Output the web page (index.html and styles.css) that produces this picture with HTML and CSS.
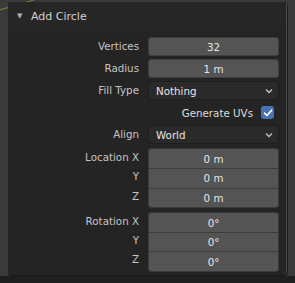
FILE: index.html
```html
<!DOCTYPE html>
<html lang="en">
<head>
<meta charset="UTF-8" />
<title>Add Circle</title>
<link rel="stylesheet" href="styles.css">
</head>
<body>
  <svg class="grid-line" width="40" height="12" viewBox="0 0 40 12"><path d="M0 10 L34 0" stroke="#6f7d2c" stroke-width="1.2" fill="none"/></svg>

  <div class="panel">
    <div class="panel-header">
      <span class="arrow">&#9660;</span>
      <span class="title">Add Circle</span>
    </div>

    <div class="panel-body">
      <div class="row">
        <div class="label">Vertices</div>
        <div class="field num">32</div>
      </div>
      <div class="row">
        <div class="label">Radius</div>
        <div class="field num">1 m</div>
      </div>
      <div class="row">
        <div class="label">Fill Type</div>
        <div class="field menu"><span>Nothing</span>
          <svg class="chev" width="8" height="6" viewBox="0 0 8 6"><path d="M1 1.5 L4 4.5 L7 1.5" stroke="#c4c4c4" stroke-width="1.3" fill="none"/></svg>
        </div>
      </div>
      <div class="row check-row">
        <span class="check-label">Generate UVs</span>
        <span class="checkbox">
          <svg width="10" height="10" viewBox="0 0 10 10"><path d="M1.5 5.2 L4 7.6 L8.6 2.2" stroke="#fff" stroke-width="1.6" fill="none" stroke-linecap="round" stroke-linejoin="round"/></svg>
        </span>
      </div>
      <div class="row">
        <div class="label">Align</div>
        <div class="field menu"><span>World</span>
          <svg class="chev" width="8" height="6" viewBox="0 0 8 6"><path d="M1 1.5 L4 4.5 L7 1.5" stroke="#c4c4c4" stroke-width="1.3" fill="none"/></svg>
        </div>
      </div>

      <div class="group">
        <div class="labels">
          <div class="label">Location X</div>
          <div class="label">Y</div>
          <div class="label">Z</div>
        </div>
        <div class="stack">
          <div class="field num">0 m</div>
          <div class="field num">0 m</div>
          <div class="field num">0 m</div>
        </div>
      </div>

      <div class="group">
        <div class="labels">
          <div class="label">Rotation X</div>
          <div class="label">Y</div>
          <div class="label">Z</div>
        </div>
        <div class="stack">
          <div class="field num">0°</div>
          <div class="field num">0°</div>
          <div class="field num">0°</div>
        </div>
      </div>
    </div>
  </div>
  <div class="bottom-bar"></div>
</body>
</html>
```

FILE: styles.css
```css
body {
  margin: 0;
  width: 295px;
  height: 283px;
  background: #3a3a3a;
  font-family: 'DejaVu Sans', 'Liberation Sans', sans-serif;
  font-size: 10.3px;
  color: #c8c8c8;
  position: relative;
  overflow: hidden;
}
.grid-line {
  position: absolute;
  left: 0;
  top: 0;
}
.panel {
  position: relative;
  margin: 2px 0 0 8px;
  width: 279px;
  height: 273px;
  background: #242424;
  border-right: 1px solid #4a4a4a;
  box-sizing: border-box;
  border-radius: 0 4px 4px 0;
  box-shadow: 1px 1px 0 #1b1b1b;
}
.panel-header {
  height: 28px;
  display: flex;
  align-items: center;
  padding-left: 9px;
  background: #262626;
}
.arrow {
  font-size: 7px;
  color: #b0b0b0;
  width: 12px;
  margin-top: -1px;
}
.title {
  color: #d0d0d0;
  font-size: 11px;
  margin-left: 2px;
}
.panel-body {
  display: flex;
  flex-direction: column;
  gap: 3px;
  padding-top: 7px;
}
.row {
  display: flex;
  align-items: center;
  height: 19px;
}
.label {
  width: 131px;
  text-align: right;
  color: #c4c4c4;
  line-height: 19.3px;
  height: 19.3px;
}
.field {
  margin-left: 9px;
  width: 131px;
  height: 19px;
  box-sizing: border-box;
  border-radius: 3px;
  display: flex;
  align-items: center;
  color: #e6e6e6;
}
.num {
  background: #545454;
  border: 1px solid #3e3e3e;
  justify-content: center;
}
.menu {
  background: #2a2a2a;
  border: 1px solid #1e1e1e;
  justify-content: space-between;
  padding: 0 5px 0 7px;
}
.check-row {
  justify-content: flex-end;
  padding-right: 12px;
  height: 19px;
}
.check-label {
  color: #dcdcdc;
  margin-right: 8px;
}
.checkbox {
  width: 13px;
  height: 13px;
  border-radius: 3px;
  background: #4772b3;
  display: flex;
  align-items: center;
  justify-content: center;
}
.group {
  display: flex;
  margin-top: 1px;
}
.labels {
  display: flex;
  flex-direction: column;
}
.stack {
  margin-left: 9px;
  display: flex;
  flex-direction: column;
  width: 131px;
  border: 1px solid #3a3a3a;
  border-radius: 3px;
  overflow: hidden;
  box-sizing: border-box;
}
.stack .field {
  margin-left: 0;
  width: auto;
  height: 19.3px;
  border: none;
  border-radius: 0;
  border-top: 1px solid #3c3c3c;
}
.stack .field:first-child {
  border-top: none;
}
.bottom-bar {
  position: absolute;
  left: 0;
  right: 0;
  top: 276px;
  bottom: 0;
  background: #1f1f1f;
}
```
